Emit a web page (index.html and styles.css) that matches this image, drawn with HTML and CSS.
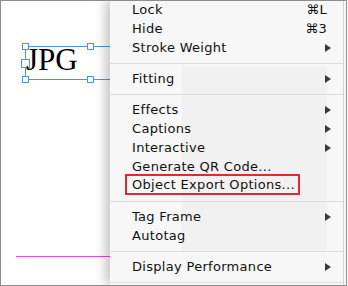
FILE: index.html
```html
<!DOCTYPE html>
<html lang="en">
<head>
    <meta charset="UTF-8">
    <meta name="viewport" content="width=device-width, initial-scale=1.0">
    <title>Context menu</title>
    <link rel="stylesheet" href="styles.css">
</head>
<body>

    <div class="frame">
        <div class="canvas">
            <div class="text-frame">
                <span class="handle tl"></span>
                <span class="handle tm"></span>
                <span class="handle lm"></span>
                <span class="handle bl"></span>
                <span class="handle bm"></span>
            </div>
            <span class="jpg">JPG</span>
            <div class="guide"></div>
        </div>

        <div class="menu">
            <div class="item"><span class="label">Lock</span><span class="key">⌘L</span></div>
            <div class="item"><span class="label">Hide</span><span class="key">⌘3</span></div>
            <div class="item"><span class="label">Stroke Weight</span><span class="arrow"></span></div>
            <div class="sep"></div>
            <div class="item"><span class="label">Fitting</span><span class="arrow"></span></div>
            <div class="sep"></div>
            <div class="item"><span class="label">Effects</span><span class="arrow"></span></div>
            <div class="item"><span class="label">Captions</span><span class="arrow"></span></div>
            <div class="item"><span class="label">Interactive</span><span class="arrow"></span></div>
            <div class="item"><span class="label">Generate QR Code...</span></div>
            <div class="item marked"><span class="label">Object Export Options...</span></div>
            <div class="sep"></div>
            <div class="item"><span class="label">Tag Frame</span><span class="arrow"></span></div>
            <div class="item"><span class="label">Autotag</span></div>
            <div class="sep"></div>
            <div class="item"><span class="label">Display Performance</span><span class="arrow"></span></div>
            <div class="sep"></div>
        </div>
    </div>

</body>
</html>
```

FILE: styles.css
```css
body {
    margin: 0;
    background: white;
    font-family: "DejaVu Sans", sans-serif;
}
.frame {
    width: 347px;
    height: 286px;
    box-sizing: border-box;
    border: 1px solid #8d8d8d;
    display: flex;
    overflow: hidden;
}
.canvas {
    width: 109px;
    flex-shrink: 0;
    position: relative;
    background: white;
}
.text-frame {
    position: absolute;
    left: 24px;
    top: 45px;
    width: 130px;
    height: 32px;
    border: 1px solid #4a94ec;
}
.handle {
    position: absolute;
    width: 5px;
    height: 5px;
    background: white;
    border: 1px solid #4a94ec;
}
.tl { left: -4px; top: -4px; }
.tm { left: 61px; top: -4px; }
.bl { left: -4px; top: 29px; }
.bm { left: 61px; top: 29px; }
.lm { left: -5px; top: 12px; width: 7px; height: 7px; }
.jpg {
    position: absolute;
    left: 25px;
    top: 43px;
    font-family: "Liberation Serif", serif;
    font-size: 31px;
    line-height: 31px;
    color: black;
}
.guide {
    position: absolute;
    left: 15px;
    top: 255px;
    width: 120px;
    height: 1px;
    background: #f046f0;
}
.menu {
    width: 234px;
    flex-shrink: 0;
    margin: -1px 2px 0 0;
    box-sizing: border-box;
    border-right: 1px solid #d4d4d4;
    position: relative;
    z-index: 1;
    box-shadow: -5px 0 10px rgba(0, 0, 0, 0.22);
    background: linear-gradient(#f1f1f1, #f1f1f1) 72px 66px / 145px 185px no-repeat, #f7f7f7;
    font-size: 13px;
    letter-spacing: 0.3px;
    color: #111;
}
.item {
    display: flex;
    align-items: center;
    height: 19px;
    line-height: 19px;
    padding: 0 12px 0 22px;
    white-space: nowrap;
}
.label {
    flex: 1;
}
.key {
    margin-right: 4px;
}
.arrow {
    width: 0;
    height: 0;
    border-left: 6px solid #3a3a3a;
    border-top: 4px solid transparent;
    border-bottom: 4px solid transparent;
}
.marked {
    width: fit-content;
    margin: -2px 0 0 15px;
    height: 17px;
    line-height: 17px;
    padding: 0 3px 0 5px;
    border: 2px solid #e02a33;
}
.sep {
    height: 12px;
    background: linear-gradient(#dcdcdc, #dcdcdc) 0 6px / 100% 1px no-repeat;
}
```
